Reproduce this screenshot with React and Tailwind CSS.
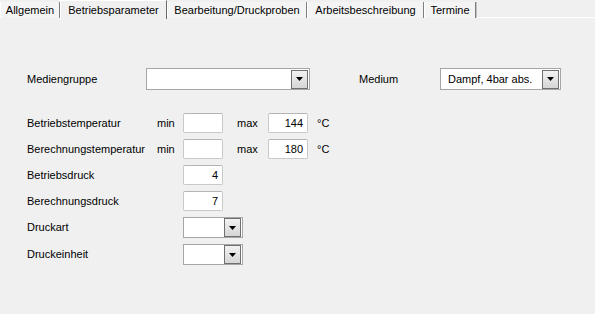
import React from "react";

const font = { fontFamily: '"Liberation Sans", Arial, sans-serif' };

function Arrow() {
  return (
    <svg width="7" height="4" viewBox="0 0 7 4">
      <path d="M0 0H7L3.5 4Z" fill="#000" />
    </svg>
  );
}

function Combo({ w, text }) {
  return (
    <div className={`${w} h-[22px] border border-[#a6a6a6] bg-white flex items-center justify-between pl-[7px] pr-[1px]`}>
      <span className="text-[11px] text-black leading-none">{text}</span>
      <div className="w-[17px] h-[19px] border border-[#707070] bg-gradient-to-b from-[#f2f2f2] to-[#d6d6d6] flex items-center justify-center">
        <Arrow />
      </div>
    </div>
  );
}

function Input({ value }) {
  return (
    <div className="w-[40px] h-[20px] border border-[#c9c9c9] border-t-[#b5b5b5] rounded-[2px] bg-white flex items-center justify-end pr-[4px] text-[11px] text-black">
      {value}
    </div>
  );
}

function Tab({ label, selected, w }) {
  if (selected) {
    return (
      <div className={`${w} h-[19px] -mb-[1px] bg-[#f0f0f0] border-l border-t border-white border-r border-r-[#696969] flex items-center justify-center text-[11px] text-black relative z-10`}>
        {label}
      </div>
    );
  }
  return (
    <div className={`${w} h-[16px] mt-[2px] bg-[#f4f4f4] border-l border-white border-r border-r-[#7f7f7f] shadow-[1px_0_0_#c0c0c0] flex items-center justify-center text-[11px] text-black`}>
      {label}
    </div>
  );
}

function TempRow({ label, max }) {
  return (
    <div className="flex items-center h-[20px]">
      <div className="w-[130px] text-[11px]">{label}</div>
      <div className="w-[26px] text-[11px]">min</div>
      <Input value="" />
      <div className="w-[14px]" />
      <div className="w-[31px] text-[11px]">max</div>
      <Input value={max} />
      <div className="w-[9px]" />
      <div className="text-[11px]">°C</div>
    </div>
  );
}

function SimpleRow({ label, children, h = "h-[20px]" }) {
  return (
    <div className={`flex items-center ${h}`}>
      <div className="w-[156px] text-[11px]">{label}</div>
      {children}
    </div>
  );
}

export default function App() {
  return (
    <div className="w-[595px] h-[314px] bg-[#f0f0f0] overflow-hidden text-black" style={font}>
      <div className="flex h-[18px] border-b border-white">
        <Tab label="Allgemein" w="w-[60px]" />
        <Tab label="Betriebsparameter" w="w-[107px]" selected />
        <Tab label="Bearbeitung/Druckproben" w="w-[140px]" />
        <Tab label="Arbeitsbeschreibung" w="w-[117px]" />
        <Tab label="Termine" w="w-[52px]" />
      </div>
      <div className="pl-[27px] pt-[50px]">
        <div className="flex items-center h-[22px]">
          <div className="w-[119px] text-[11px]">Mediengruppe</div>
          <Combo w="w-[164px]" text="" />
          <div className="w-[49px]" />
          <div className="w-[81px] text-[11px]">Medium</div>
          <Combo w="w-[121px]" text="Dampf, 4bar abs." />
        </div>
        <div className="flex flex-col gap-[6px] mt-[23px]">
          <TempRow label="Betriebstemperatur" max="144" />
          <TempRow label="Berechnungstemperatur" max="180" />
          <SimpleRow label="Betriebsdruck">
            <Input value="4" />
          </SimpleRow>
          <SimpleRow label="Berechnungsdruck">
            <Input value="7" />
          </SimpleRow>
          <SimpleRow label="Druckart" h="h-[21px]">
            <Combo w="w-[60px] !h-[21px]" text="" />
          </SimpleRow>
          <SimpleRow label="Druckeinheit" h="h-[21px]">
            <Combo w="w-[60px] !h-[21px]" text="" />
          </SimpleRow>
        </div>
      </div>
    </div>
  );
}
